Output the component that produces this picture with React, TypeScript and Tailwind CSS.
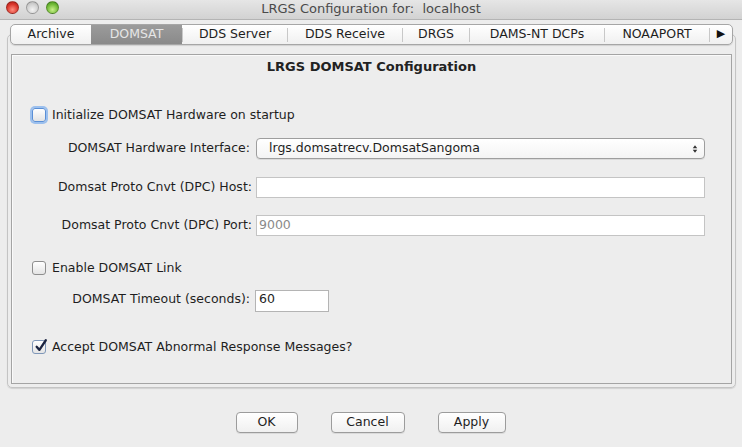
import React from 'react'

const FONT = "font-['DejaVu_Sans',_'Liberation_Sans',_sans-serif]"

const TABS: { label: string; w: number; sep: boolean; active?: boolean }[] = [
  { label: 'Archive', w: 80, sep: false },
  { label: 'DOMSAT', w: 91, sep: false, active: true },
  { label: 'DDS Server', w: 104, sep: true },
  { label: 'DDS Receive', w: 114, sep: true },
  { label: 'DRGS', w: 66, sep: true },
  { label: 'DAMS-NT DCPs', w: 134, sep: true },
  { label: 'NOAAPORT', w: 104, sep: true },
]

function Light({ color }: { color: string }) {
  return (
    <span
      className="block w-[13px] h-[13px] rounded-full border border-black/25"
      style={{ background: color }}
    />
  )
}

function Checkbox({ checked, focused }: { checked?: boolean; focused?: boolean }) {
  return (
    <span
      className={`relative block w-[14px] h-[14px] rounded-[3px] border bg-gradient-to-b from-white to-[#e4e4e4] ${
        focused
          ? 'border-[#5a8fd6] shadow-[0_0_0_2px_#9cc0ee]'
          : checked
          ? 'border-[#7f97b8] from-[#eef4fc] to-[#c8d8ee]'
          : 'border-[#8e8e8e]'
      }`}
    >
      {checked && (
        <svg viewBox="0 0 16 16" className="absolute left-[1px] -top-[3px] w-[14px] h-[15px]">
          <path d="M3 9.5 L6.2 13 L13.5 2" fill="none" stroke="#1a2340" strokeWidth="2.6" strokeLinecap="round" strokeLinejoin="round" />
        </svg>
      )}
    </span>
  )
}

function Button({ label, w }: { label: string; w: number }) {
  return (
    <button
      className="h-[21px] rounded-[4px] border border-[#9c9c9c] bg-gradient-to-b from-white to-[#f0f0f0] text-[12.5px] text-[#1e1e1e] shadow-[0_1px_0_rgba(0,0,0,0.08)]"
      style={{ width: w }}
    >
      {label}
    </button>
  )
}

export default function App() {
  return (
    <div className={`w-[742px] h-[447px] bg-[#ededed] text-[12.5px] text-[#1e1e1e] overflow-hidden ${FONT}`}>
      {/* barre de titre */}
      <div className="relative h-[20px] bg-gradient-to-b from-[#e6e6e6] to-[#d2d2d2] border-b border-[#b4b4b4] flex items-center">
        <div className="absolute left-[6px] top-[1px] flex gap-[7px]">
          <Light color="radial-gradient(circle at 50% 70%, #ff8f80, #d8342a 60%, #a8201a)" />
          <Light color="radial-gradient(circle at 50% 70%, #f4f4f4, #cfcfcf 60%, #b0b0b0)" />
          <Light color="radial-gradient(circle at 50% 70%, #c9f08a, #6fb935 60%, #3f8a1c)" />
        </div>
        <div className="w-full text-center text-[13px] text-[#4a4a4a] leading-none -mt-[2px]">
          LRGS Configuration for:&nbsp; localhost
        </div>
      </div>

      <div className="px-[7px]">
        {/* panneau à onglets */}
        <div className="mt-[14px] h-[354px] w-[729px] rounded-[5px] border border-[#c4c4c4] shadow-[0_1px_1px_rgba(0,0,0,0.12)] flex flex-col">
          <div className="-mt-[11px] ml-[2px] w-[723px] h-[21px] flex rounded-[5px] border border-[#a6a6a6] bg-gradient-to-b from-white to-[#f0f0f0] shadow-[0_1px_1px_rgba(0,0,0,0.12)] overflow-hidden">
            {TABS.map((t) => (
              <React.Fragment key={t.label}>
                {t.sep && <span className="w-px h-[14px] self-center bg-[#c8c8c8]" />}
                <div
                  className={`flex items-center justify-center text-[12.5px] ${
                    t.active ? 'bg-gradient-to-b from-[#9b9b9b] to-[#8a8a8a] text-[#e6e6e6]' : 'text-[#1e1e1e]'
                  }`}
                  style={{ width: t.w }}
                >
                  {t.label}
                </div>
              </React.Fragment>
            ))}
            <span className="w-px h-[14px] self-center bg-[#c8c8c8]" />
            <div className="flex-1 flex items-center justify-center text-[11px] text-[#111]">▶</div>
          </div>

          {/* boîte intérieure */}
          <div className="ml-[3px] mt-[9px] w-[721px] h-[330px] border border-[#a4a4a4] shadow-[inset_1px_1px_0_#fafafa] flex flex-col">
            <div className="h-[24px] flex items-center justify-center font-bold text-[13px] text-[#222]">
              LRGS DOMSAT Configuration
            </div>

            <label className="mt-[26px] h-[20px] ml-[20px] flex items-center gap-[6px]">
              <Checkbox focused />
              <span>Initialize DOMSAT Hardware on startup</span>
            </label>

            <div className="mt-[13px] flex items-center">
              <span className="w-[238px] text-right">DOMSAT Hardware Interface:</span>
              <div className="ml-[6px] w-[449px] h-[21px] rounded-[4px] border border-[#9e9e9e] bg-gradient-to-b from-white to-[#f4f4f4] shadow-[0_1px_0_rgba(0,0,0,0.08)] flex items-center pl-[12px] pr-[6px]">
                <span className="flex-1">lrgs.domsatrecv.DomsatSangoma</span>
                <svg viewBox="0 0 8 12" className="w-[6px] h-[10px]">
                  <path d="M4 1 L7 5 L1 5 Z M4 11 L7 7 L1 7 Z" fill="#333" />
                </svg>
              </div>
            </div>

            <div className="mt-[18px] flex items-center">
              <span className="w-[240px] text-right">Domsat Proto Cnvt (DPC) Host:</span>
              <div className="ml-[4px] w-[449px] h-[21px] border border-[#c4c4c4] bg-white" />
            </div>

            <div className="mt-[17px] flex items-center">
              <span className="w-[240px] text-right">Domsat Proto Cnvt (DPC) Port:</span>
              <div className="ml-[4px] w-[449px] h-[21px] border border-[#c4c4c4] bg-white flex items-center pl-[2px] text-[#8a8a8a]">
                9000
              </div>
            </div>

            <label className="mt-[22px] h-[20px] ml-[20px] flex items-center gap-[6px]">
              <Checkbox />
              <span>Enable DOMSAT Link</span>
            </label>

            <div className="mt-[12px] flex items-start">
              <span className="w-[238px] text-right pt-[0px]">DOMSAT Timeout (seconds):</span>
              <div className="ml-[5px] w-[74px] h-[22px] border border-[#b4b4b4] bg-white flex items-end pb-[2px] pl-[3px]">
                60
              </div>
            </div>

            <label className="mt-[25px] h-[20px] ml-[20px] flex items-center gap-[6px]">
              <Checkbox checked />
              <span>Accept DOMSAT Abnormal Response Messages?</span>
            </label>
          </div>
        </div>

        {/* boutons */}
        <div className="mt-[24px] flex justify-center gap-[33px] pr-[1px]">
          <Button label="OK" w={62} />
          <Button label="Cancel" w={74} />
          <Button label="Apply" w={68} />
        </div>
      </div>
    </div>
  )
}
